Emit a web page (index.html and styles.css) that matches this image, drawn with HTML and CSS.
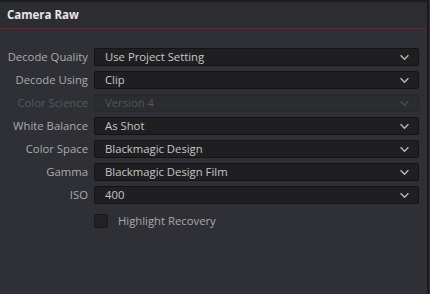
FILE: index.html
```html
<!DOCTYPE html>
<html lang="en">
<head>
    <meta charset="UTF-8">
    <title>Camera Raw</title>
    <link rel="stylesheet" href="styles.css">
</head>
<body>
<div id="app">
    <div class="top-bar"></div>
    <div class="header">Camera Raw</div>
    <div class="form">
        <span class="label">Decode Quality</span>
        <div class="select"><span>Use Project Setting</span><svg class="chev" viewBox="0 0 12 8"><path d="M1.5 1.5 6 6 10.5 1.5"/></svg></div>

        <span class="label">Decode Using</span>
        <div class="select"><span>Clip</span><svg class="chev" viewBox="0 0 12 8"><path d="M1.5 1.5 6 6 10.5 1.5"/></svg></div>

        <span class="label disabled">Color Science</span>
        <div class="select disabled"><span>Version 4</span><svg class="chev" viewBox="0 0 12 8"><path d="M1.5 1.5 6 6 10.5 1.5"/></svg></div>

        <span class="label">White Balance</span>
        <div class="select"><span>As Shot</span><svg class="chev" viewBox="0 0 12 8"><path d="M1.5 1.5 6 6 10.5 1.5"/></svg></div>

        <span class="label">Color Space</span>
        <div class="select"><span>Blackmagic Design</span><svg class="chev" viewBox="0 0 12 8"><path d="M1.5 1.5 6 6 10.5 1.5"/></svg></div>

        <span class="label">Gamma</span>
        <div class="select"><span>Blackmagic Design Film</span><svg class="chev" viewBox="0 0 12 8"><path d="M1.5 1.5 6 6 10.5 1.5"/></svg></div>

        <span class="label">ISO</span>
        <div class="select"><span>400</span><svg class="chev" viewBox="0 0 12 8"><path d="M1.5 1.5 6 6 10.5 1.5"/></svg></div>

        <span></span>
        <label class="check"><span class="box"></span>Highlight Recovery</label>
    </div>
</div>
</body>
</html>
```

FILE: styles.css
```css
* {
    margin: 0;
    padding: 0;
    box-sizing: border-box;
}

body {
    width: 430px;
    height: 294px;
    background-color: #2f3035;
    font-family: "Open Sans", "Noto Sans", sans-serif;
    font-size: 11.3px;
    overflow: hidden;
}

#app {
    width: 429px;
    height: 294px;
    border-right: 2px solid #1b1b1e;
    background-color: #2f3035;
}

.top-bar {
    height: 2px;
    background-color: #1c1c1f;
}

.header {
    height: 27px;
    padding-left: 7px;
    line-height: 25px;
    font-size: 11.5px;
    font-weight: bold;
    color: #e6e6e6;
    background-color: #2c2d32;
    border-bottom: 1px solid #5b2b30;
}

.form {
    display: grid;
    grid-template-columns: 88px 325px;
    column-gap: 6px;
    row-gap: 5px;
    padding-top: 19px;
    align-items: center;
}

.label {
    text-align: right;
    color: #ababab;
    line-height: 18px;
}

.label.disabled {
    color: #57585d;
}

.select {
    display: flex;
    align-items: center;
    justify-content: space-between;
    height: 18px;
    padding: 0 8px 0 10px;
    background-color: #1f1f21;
    border: 1px solid #141416;
    border-radius: 2px;
    color: #c6c6c6;
    line-height: 16px;
}

.select.disabled {
    background-color: #2b2c30;
    border-color: #27282c;
    color: #55565a;
}

.chev {
    width: 11px;
    height: 7px;
    fill: none;
    stroke: #b8b8b8;
    stroke-width: 1.6;
}

.select.disabled .chev {
    stroke: #4a4b50;
}

.check {
    display: flex;
    align-items: center;
    margin-top: 3px;
    color: #a9a9a9;
    line-height: 18px;
}

.box {
    width: 14px;
    height: 14px;
    margin-right: 10px;
    background-color: #222224;
    border: 1px solid #18181a;
    border-radius: 2px;
}
```
